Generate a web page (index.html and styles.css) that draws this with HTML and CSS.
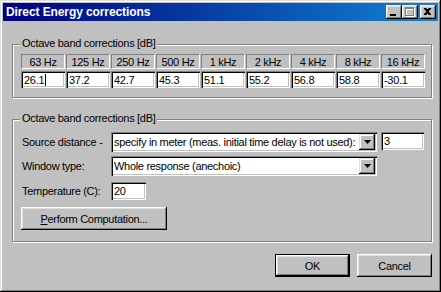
FILE: index.html
```html
<!DOCTYPE html>
<html>
<head>
<meta charset="utf-8">
<link rel="stylesheet" href="styles.css">
</head>
<body>
<div class="window">
  <div class="titlebar">
    <span class="title">Direct Energy corrections</span>
    <div class="caption-btns">
      <span class="cbtn"><svg width="16" height="14" viewBox="0 0 16 14"><rect x="4" y="9" width="6" height="2" fill="#000"/></svg></span>
      <span class="cbtn"><svg width="16" height="14" viewBox="0 0 16 14"><path d="M4 3h9v9h-9z M5 5h7v6h-7z" fill="#fff" fill-rule="evenodd"/><path d="M3 2h9v9h-9z M4 4h7v6h-7z" fill="#808080" fill-rule="evenodd"/></svg></span>
      <span class="cbtn close"><svg width="16" height="14" viewBox="0 0 16 14"><path d="M4 3h2l1 1h1l1-1h2v1l-2 2v1l2 2v1h-2l-1-1h-1l-1 1h-2v-1l2-2v-1l-2-2z" fill="#000"/></svg></span>
    </div>
  </div>
  <div class="client">
    <div class="group g1">
      <span class="legend">Octave band corrections [dB]</span>
      <div class="bands">
        <span class="hdr">63 Hz</span>
        <span class="hdr">125 Hz</span>
        <span class="hdr">250 Hz</span>
        <span class="hdr">500 Hz</span>
        <span class="hdr">1 kHz</span>
        <span class="hdr">2 kHz</span>
        <span class="hdr">4 kHz</span>
        <span class="hdr">8 kHz</span>
        <span class="hdr">16 kHz</span>
        <span class="edit">26.1<span class="caret"></span></span>
        <span class="edit">37.2</span>
        <span class="edit">42.7</span>
        <span class="edit">45.3</span>
        <span class="edit">51.1</span>
        <span class="edit">55.2</span>
        <span class="edit">56.8</span>
        <span class="edit">58.8</span>
        <span class="edit">-30.1</span>
      </div>
    </div>
    <div class="group g2">
      <span class="legend">Octave band corrections [dB]</span>
      <div class="row">
        <span class="label">Source distance -</span>
        <div class="combo wide">
          <span class="combo-text">specify in meter (meas. initial time delay is not used):</span>
          <span class="dd"><svg width="7" height="4" viewBox="0 0 7 4"><path d="M0 0h7l-3.5 4z" fill="#000"/></svg></span>
        </div>
        <span class="edit num">3</span>
      </div>
      <div class="row r2">
        <span class="label">Window type:</span>
        <div class="combo wide">
          <span class="combo-text">Whole response (anechoic)</span>
          <span class="dd"><svg width="7" height="4" viewBox="0 0 7 4"><path d="M0 0h7l-3.5 4z" fill="#000"/></svg></span>
        </div>
      </div>
      <div class="row r3">
        <span class="label">Temperature (C):</span>
        <span class="edit temp">20</span>
      </div>
      <span class="btn perform"><u>P</u>erform Computation...</span>
    </div>
    <div class="actions">
      <span class="btn default">OK</span>
      <span class="btn">Cancel</span>
    </div>
  </div>
</div>
</body>
</html>
```

FILE: styles.css
```css
* { box-sizing: border-box; }
html, body { margin: 0; padding: 0; background: #c0c0c0; }
body {
  font-family: "Liberation Sans", Arial, sans-serif;
  font-size: 11px;
  letter-spacing: -0.3px;
  color: #000;
  width: 441px;
  height: 292px;
  overflow: hidden;
}
.window {
  width: 441px;
  height: 292px;
  padding: 3px;
  background: #c0c0c0;
  display: flex;
  flex-direction: column;
  box-shadow: inset -1px -1px #000, inset 1px 1px #dfdfdf, inset -2px -2px #808080, inset 2px 2px #fff;
}
.titlebar {
  height: 18px;
  flex: none;
  display: flex;
  align-items: center;
  padding: 0 2px 0 3px;
  background: linear-gradient(to right, #000080, #1084d0);
  color: #fff;
}
.title {
  flex: 1;
  font-weight: bold;
  font-size: 12px;
  letter-spacing: -0.1px;
  line-height: 18px;
}
.caption-btns { display: flex; }
.cbtn {
  width: 16px;
  height: 14px;
  display: flex;
  background: #c0c0c0;
  box-shadow: inset -1px -1px #000, inset 1px 1px #fff, inset -2px -2px #808080, inset 2px 2px #dfdfdf;
}
.cbtn.close { margin-left: 2px; }
.client {
  flex: 1;
  display: flex;
  flex-direction: column;
  padding: 0 6px 0 9px;
}
.group {
  position: relative;
  border: 1px solid #808080;
  box-shadow: inset 1px 1px #fff, 1px 1px #fff;
}
.legend {
  position: absolute;
  top: -8px;
  left: 7px;
  padding: 0 2px;
  line-height: 13px;
  background: #c0c0c0;
}
.g1 {
  margin-top: 23px;
  height: 54px;
  padding: 9px 0 0 8px;
}
.bands {
  display: grid;
  grid-template-columns: repeat(9, 44px);
  grid-template-rows: 15px 17px;
  column-gap: 1px;
  row-gap: 2px;
}
.hdr {
  display: flex;
  align-items: center;
  justify-content: center;
  border-top: 1px solid #808080;
  border-left: 1px solid #808080;
  border-bottom: 1px solid #fff;
  border-right: 1px solid #fff;
}
.edit {
  display: flex;
  align-items: center;
  padding-left: 3px;
  background: #fff;
  box-shadow: inset 1px 1px #808080, inset 2px 2px #000, inset -1px -1px #fff, inset -2px -2px #c0c0c0;
}
.caret {
  width: 1px;
  height: 12px;
  margin-left: 1px;
  background: #000;
}
.g2 {
  margin-top: 21px;
  height: 123px;
  padding: 12px 0 0 9px;
  display: flex;
  flex-direction: column;
  align-items: flex-start;
}
.row {
  display: flex;
  align-items: flex-start;
  height: 20px;
}
.r2 { margin-top: 4px; }
.r3 { margin-top: 6px; height: 18px; }
.label {
  width: 89px;
  line-height: 20px;
}
.r3 .label { line-height: 18px; }
.combo {
  height: 20px;
  display: flex;
  padding: 2px;
  background: #fff;
  box-shadow: inset 1px 1px #808080, inset 2px 2px #000, inset -1px -1px #fff, inset -2px -2px #c0c0c0;
}
.combo.wide { width: 266px; }
.combo-text {
  flex: 1;
  padding-left: 1px;
  line-height: 16px;
  white-space: nowrap;
  overflow: hidden;
}
.dd {
  width: 16px;
  height: 16px;
  display: flex;
  align-items: center;
  justify-content: center;
  background: #c0c0c0;
  box-shadow: inset -1px -1px #000, inset 1px 1px #dfdfdf, inset -2px -2px #808080, inset 2px 2px #fff;
}
.edit.num {
  width: 43px;
  height: 18px;
  margin-left: 4px;
}
.edit.temp {
  width: 35px;
  height: 18px;
}
.btn {
  display: flex;
  align-items: center;
  justify-content: center;
  width: 75px;
  height: 23px;
  background: #c0c0c0;
  box-shadow: inset -1px -1px #000, inset 1px 1px #fff, inset -2px -2px #808080, inset 2px 2px #dfdfdf;
}
.btn.perform {
  width: 146px;
  margin-top: 7px;
  margin-left: -1px;
}
.btn.default {
  border: 1px solid #000;
}
.actions {
  margin-top: 12px;
  display: flex;
  justify-content: flex-end;
  gap: 7px;
}
```
